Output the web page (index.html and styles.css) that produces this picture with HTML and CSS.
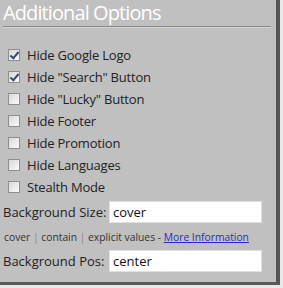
FILE: index.html
```html
<!DOCTYPE html>
<html lang="en">
<head>
    <meta charset="UTF-8">
    <title>Additional Options</title>
    <link rel="stylesheet" href="styles.css">
</head>
<body>
    <div class="panel">
        <h2>Additional Options</h2>
        <ul class="options">
            <li><input type="checkbox" checked><span>Hide Google Logo</span></li>
            <li><input type="checkbox" checked><span>Hide "Search" Button</span></li>
            <li><input type="checkbox"><span>Hide "Lucky" Button</span></li>
            <li><input type="checkbox"><span>Hide Footer</span></li>
            <li><input type="checkbox"><span>Hide Promotion</span></li>
            <li><input type="checkbox"><span>Hide Languages</span></li>
            <li><input type="checkbox"><span>Stealth Mode</span></li>
        </ul>
        <div class="field">
            <label>Background Size:</label>
            <input type="text" value="cover">
        </div>
        <div class="hint">cover <i>|</i> contain <i>|</i> explicit values - <a href="#">More Information</a></div>
        <div class="field">
            <label>Background Pos:</label>
            <input type="text" value="center">
        </div>
    </div>
</body>
</html>
```
FILE: styles.css
```css
body {
    margin: 0;
    background: #e9e9e9;
    font-family: "Open Sans", "DejaVu Sans", sans-serif;
}
.panel {
    width: 280px;
    height: 285px;
    box-sizing: border-box;
    background: #c0c0c0;
    padding: 1px 3px 0 3px;
    border-right: 4px solid #555;
    border-bottom: 3px solid #5a5a5a;
}
h2 {
    margin: 0 2px 0 0;
    color: #fff;
    font-weight: normal;
    font-size: 20px;
    letter-spacing: -0.9px;
    line-height: 24px;
    border-bottom: 1px solid #8a8a8a;
    box-shadow: 0 1px 0 #d4d4d4;
    padding-bottom: 1px;
}
.options {
    list-style: none;
    margin: 17px 0 0 0;
    padding: 0;
}
.options li {
    display: flex;
    align-items: center;
    height: 22px;
    font-size: 13px;
    letter-spacing: -0.2px;
    color: #222;
}
.options input {
    appearance: none;
    position: relative;
    margin: 0 7px 0 5px;
    width: 12px;
    height: 12px;
    border: 1px solid #8e8e8e;
    background: linear-gradient(135deg, #d8d8d8, #fbfbfb);
}
.options input:checked::after {
    content: "";
    position: absolute;
    left: 3px;
    top: 0px;
    width: 3px;
    height: 7px;
    border: solid #3b4770;
    border-width: 0 2px 2px 0;
    transform: rotate(40deg);
}
.field {
    display: flex;
    align-items: center;
    margin-top: 3px;
    font-size: 13px;
    color: #222;
}
.field label {
    width: 106px;
}
.field input {
    width: 153px;
    height: 22px;
    box-sizing: border-box;
    border: 1px solid #e0e0e0;
    background: #fff;
    font-family: inherit;
    font-size: 13px;
    padding: 0 3px;
    color: #111;
}
.hint {
    font-size: 10.3px;
    color: #333;
    margin: 7px 0 6px 1px;
}
.hint i {
    font-style: normal;
    color: #8a8a8a;
}
.hint a {
    color: #2a2ad0;
}
```
